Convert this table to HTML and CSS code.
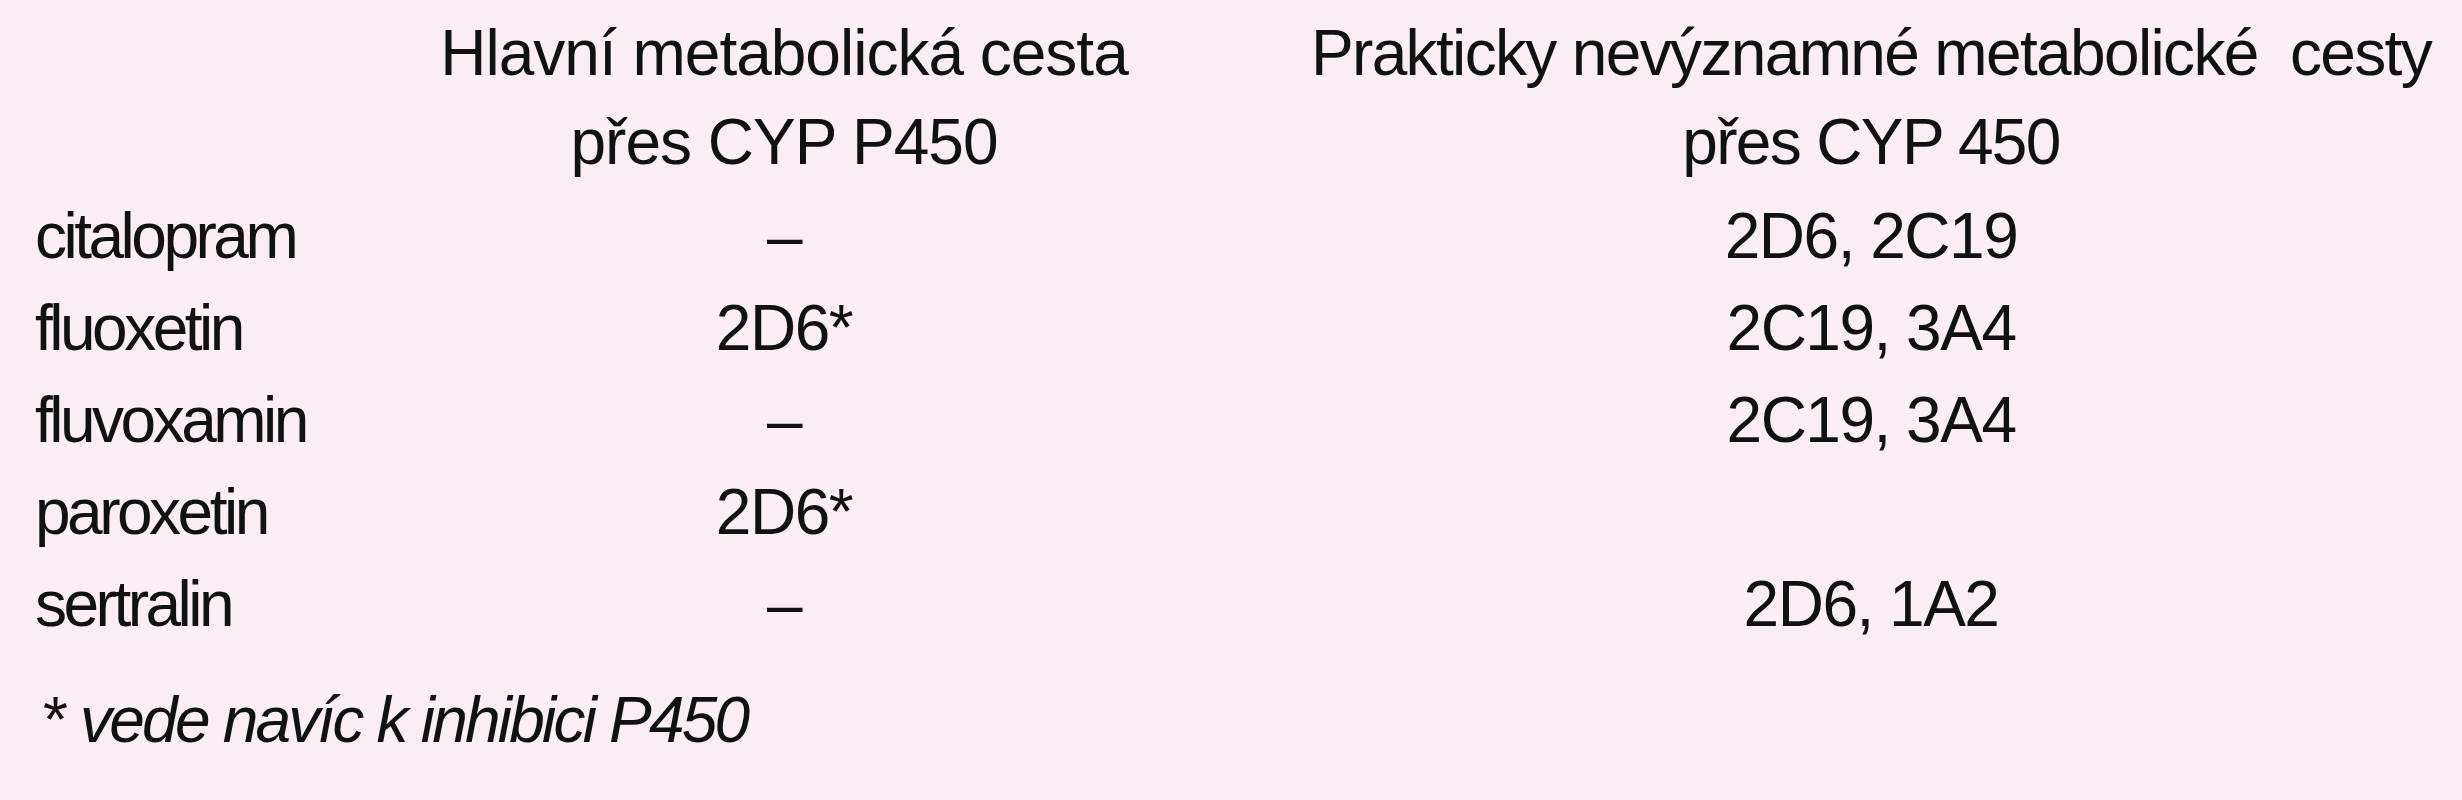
FILE: index.html
```html
<!DOCTYPE html>
<html lang="cs">
<head>
<meta charset="utf-8">
<title>Metabolické cesty SSRI</title>
<link rel="stylesheet" href="styles.css">
</head>
<body>
<div class="sheet">
  <div class="grid">
    <div class="cell head c1"></div>
    <div class="cell head c2">Hlavní metabolická cesta<br>přes CYP P450</div>
    <div class="cell head c3 wide">Prakticky nevýznamné metabolické&nbsp; cesty<br>přes CYP 450</div>

    <div class="cell c1 label">citalopram</div>
    <div class="cell c2 val">–</div>
    <div class="cell c3 val">2D6, 2C19</div>

    <div class="cell c1 label">fluoxetin</div>
    <div class="cell c2 val">2D6*</div>
    <div class="cell c3 val">2C19, 3A4</div>

    <div class="cell c1 label">fluvoxamin</div>
    <div class="cell c2 val">–</div>
    <div class="cell c3 val">2C19, 3A4</div>

    <div class="cell c1 label">paroxetin</div>
    <div class="cell c2 val">2D6*</div>
    <div class="cell c3 val"></div>

    <div class="cell c1 label">sertralin</div>
    <div class="cell c2 val">–</div>
    <div class="cell c3 val">2D6, 1A2</div>
  </div>
  <p class="note">* <em>vede navíc k inhibici P450</em></p>
</div>
</body>
</html>
```

FILE: styles.css
```css
html, body {
  margin: 0;
  padding: 0;
  background: #f8eef4;
}

body {
  font-family: "Liberation Sans", Arial, sans-serif;
  color: #111;
  font-size: 64px;
}

.sheet {
  padding: 9px 0 0 35px;
}

.grid {
  display: grid;
  grid-template-columns: 354px 790px 1260px;
}

.cell {
  height: 92px;
  line-height: 92px;
  white-space: nowrap;
}

.head {
  height: auto;
  line-height: 89px;
  letter-spacing: -1px;
  padding-bottom: 3px;
}

.head.wide {
  letter-spacing: -1.65px;
}

.c2 {
  text-align: center;
}

.c3 {
  text-align: center;
  padding-left: 124px;
}

.label {
  letter-spacing: -3.5px;
}

.val {
  letter-spacing: -1.5px;
}

.note {
  margin: 24px 0 0 8px;
  line-height: 92px;
  letter-spacing: -2.8px;
  white-space: nowrap;
}

.note em {
  font-style: italic;
}
```
